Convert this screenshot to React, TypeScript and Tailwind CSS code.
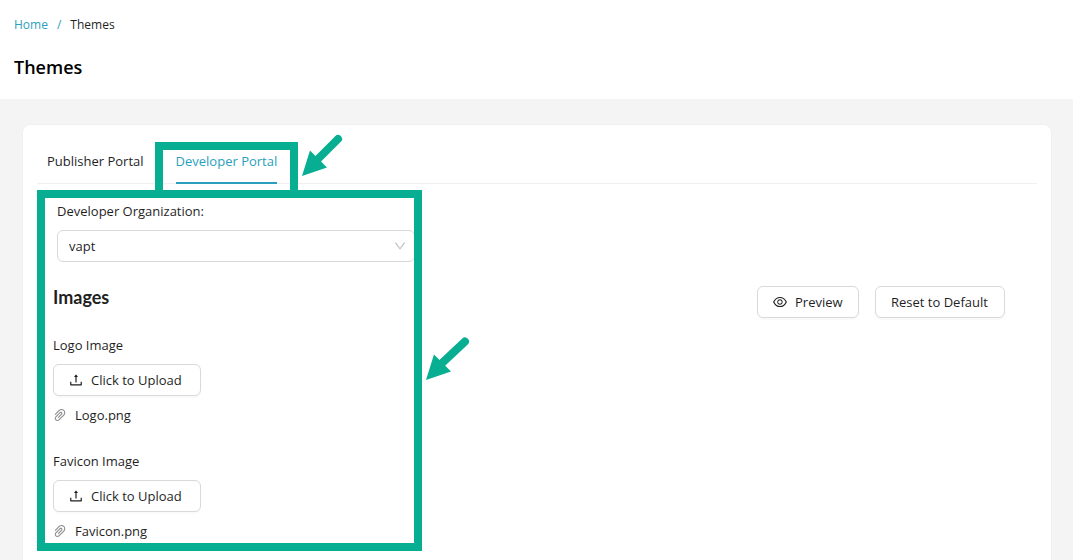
import { AiOutlineDown, AiOutlineEye, AiOutlinePaperClip, AiOutlineUpload } from "react-icons/ai";
import type { ReactNode } from "react";

const UPLOADS = [
  { id: "logo", label: "Logo Image", file: "Logo.png" },
  { id: "favicon", label: "Favicon Image", file: "Favicon.png" },
];

const Arrow: React.FC<{ shaft: string; className: string }> = ({ shaft, className }) => (
  <svg viewBox="0 0 44 44" aria-hidden className={`absolute h-11 w-11 ${className}`}>
    <path d={shaft} stroke="#08ae91" strokeWidth="8" strokeLinecap="round" />
    <path d="M0 43 8 17.500 25 34.500Z" fill="#08ae91" />
  </svg>
);

const Button: React.FC<{ id?: string; className: string; children: ReactNode }> = ({ id, className, children }) => (
  <button
    id={id}
    type="button"
    className={`flex h-8 items-center gap-2 rounded-md border border-[#d9d9d9] bg-white px-[15px] whitespace-nowrap shadow-[0_2px_0_rgba(0,0,0,0.02)] ${className}`}
  >
    {children}
  </button>
);

export default function App() {
  return (
    <div className="flex min-h-screen flex-col bg-[#f4f4f4] font-['Open_Sans',sans-serif] text-[13px] leading-[22px] text-[#1f1f1f]">
      <header className="bg-white px-3.5 pt-3.5 pb-[17px]">
        <nav className="flex gap-[9px] text-xs leading-[22px] text-[#2a9fbd]">
          <a href="#home">Home</a>
          <span>/</span>
          <span className="text-[#1f1f1f]">Themes</span>
        </nav>
        <h1 className="mt-4 text-lg leading-[30px] font-semibold text-black">Themes</h1>
      </header>

      <main className="mt-[25px] mr-[21px] ml-[22px] flex flex-1 flex-col">
        <section className="flex-1 rounded-t-lg border border-b-0 border-[#f0f0f0] bg-white px-3.5">
          <div role="tablist" className="mt-[17px] flex h-[42px] gap-8 border-b border-[#f0f0f0] px-2.5">
            <button type="button" role="tab" aria-selected="false" className="flex h-[42px] items-center pb-1">
              Publisher Portal
            </button>
            <button
              type="button"
              role="tab"
              aria-selected="true"
              className="relative flex h-[42px] items-center border-b-2 border-[#2a9fbd] pb-0.5 text-[#2a9fbd]"
            >
              Developer Portal
              <span className="absolute -inset-x-[21px] top-0 h-14 border-8 border-[#08ae91]" />
              <Arrow shaft="M36 6 14 28" className="-top-[9px] -right-[69px]" />
            </button>
          </div>

          <div role="tabpanel" className="relative px-4 pt-4">
            <div className="ml-1 w-[358px]">
              <label htmlFor="organization" className="block">
                Developer Organization:
              </label>
              <div className="relative mt-2">
                <select
                  id="organization"
                  className="h-8 w-full appearance-none rounded-md border border-[#d9d9d9] bg-white px-[11px]"
                >
                  <option>vapt</option>
                </select>
                <AiOutlineDown className="pointer-events-none absolute top-[9px] right-2 h-3.5 w-3.5 text-[#bfbfbf]" />
              </div>
            </div>

            <div className="mt-6 flex items-start justify-between pr-4">
              <h2 className="font-['Lato',sans-serif] text-lg leading-[22px] font-bold">Images</h2>
              <div className="flex gap-4">
                <Button className="w-[102px]">
                  <AiOutlineEye className="-mx-px h-4 w-4 shrink-0" />
                  Preview
                </Button>
                <Button className="w-[130px]">Reset to Default</Button>
              </div>
            </div>

            <div className="mt-4 grid gap-6">
              {UPLOADS.map((item) => (
                <div key={item.id}>
                  <label htmlFor={item.id} className="block">
                    {item.label}
                  </label>
                  <Button id={item.id} className="mt-2 w-[148px]">
                    <AiOutlineUpload className="-mx-px h-4 w-4 shrink-0" />
                    Click to Upload
                  </Button>
                  <div className="mt-2 flex items-center gap-2">
                    <AiOutlinePaperClip className="-mx-px h-4 w-4 shrink-0 text-[#8c8c8c]" />
                    {item.file}
                  </div>
                </div>
              ))}
            </div>

            <div className="pointer-events-none absolute top-1.5 left-0 h-[361px] w-[385px] border-8 border-[#08ae91]">
              <Arrow shaft="M39 4.500 14 28" className="top-[139px] -right-14" />
            </div>
          </div>
        </section>
      </main>
    </div>
  );
}
